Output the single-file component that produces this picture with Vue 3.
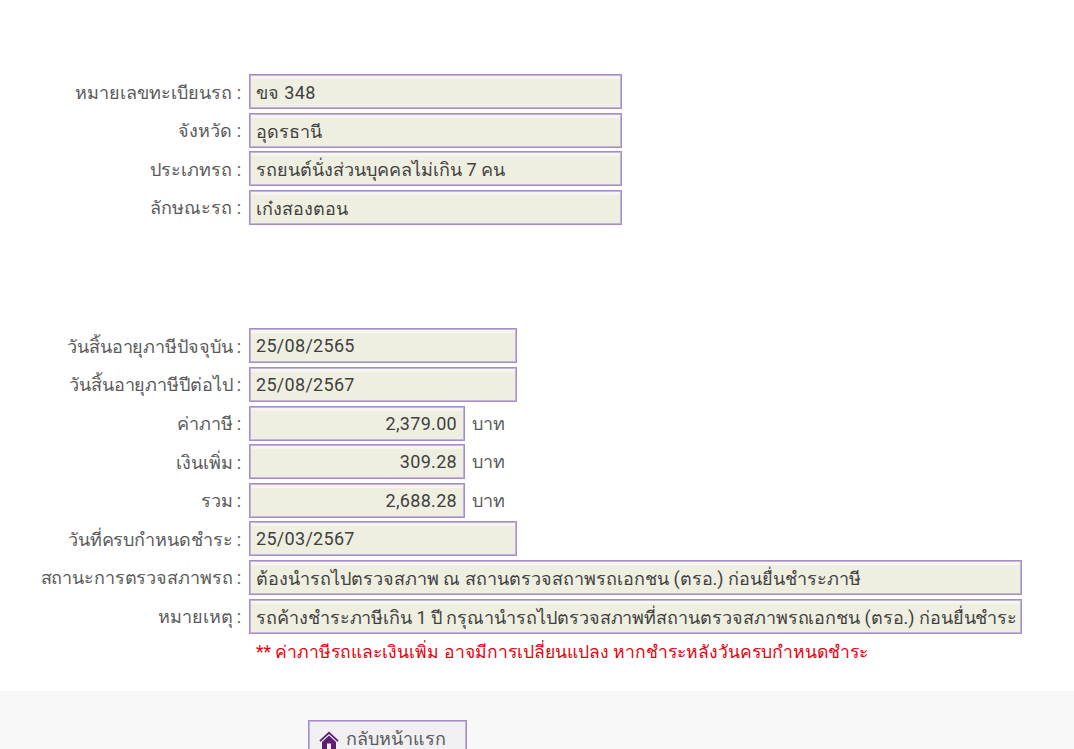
<script setup>
const top = [
  { label: 'หมายเลขทะเบียนรถ :', value: 'ขจ 348', size: 'w-372', fix: 'digits' },
  { label: 'จังหวัด :', value: 'อุดรธานี', size: 'w-372' },
  { label: 'ประเภทรถ :', value: 'รถยนต์นั่งส่วนบุคคลไม่เกิน 7 คน', size: 'w-372' },
  { label: 'ลักษณะรถ :', value: 'เก๋งสองตอน', size: 'w-372' },
]
const bottom = [
  { label: 'วันสิ้นอายุภาษีปัจจุบัน :', value: '25/08/2565', size: 'w-267', fix: 'digits' },
  { label: 'วันสิ้นอายุภาษีปีต่อไป :', value: '25/08/2567', size: 'w-267', fix: 'digits' },
  { label: 'ค่าภาษี :', value: '2,379.00', size: 'w-215', fix: 'digits num', unit: 'บาท' },
  { label: 'เงินเพิ่ม :', value: '309.28', size: 'w-215', fix: 'digits num', unit: 'บาท' },
  { label: 'รวม :', value: '2,688.28', size: 'w-215', fix: 'digits num', unit: 'บาท' },
  { label: 'วันที่ครบกำหนดชำระ :', value: '25/03/2567', size: 'w-267', fix: 'digits' },
  { label: 'สถานะการตรวจสภาพรถ :', value: 'ต้องนำรถไปตรวจสภาพ ณ สถานตรวจสถาพรถเอกชน (ตรอ.) ก่อนยื่นชำระภาษี', size: 'w-773', fix: 'low' },
  { label: 'หมายเหตุ :', value: 'รถค้างชำระภาษีเกิน 1 ปี กรุณานำรถไปตรวจสภาพที่สถานตรวจสภาพรถเอกชน (ตรอ.) ก่อนยื่นชำระ', size: 'w-773', fix: 'low tight' },
]
</script>

<template>
  <div class="page">
    <section class="group first">
      <div v-for="r in top" :key="r.label" class="row">
        <div class="label">{{ r.label }}</div>
        <div class="field" :class="[r.size, r.fix]">{{ r.value }}</div>
      </div>
    </section>
    <section class="group second">
      <div v-for="r in bottom" :key="r.label" class="row">
        <div class="label">{{ r.label }}</div>
        <div class="field" :class="[r.size, r.fix]">{{ r.value }}</div>
        <span v-if="r.unit" class="unit">{{ r.unit }}</span>
      </div>
      <div class="note">** ค่าภาษีรถและเงินเพิ่ม อาจมีการเปลี่ยนแปลง หากชำระหลังวันครบกำหนดชำระ</div>
    </section>
    <footer class="foot">
      <button class="home" type="button">
        <svg width="20" height="18" viewBox="0 0 20 18" class="ico">
          <path d="M10 0.5 L0.3 9.6 L1.6 10.8 L10 3 L18.4 10.8 L19.7 9.6 Z" fill="#5e1f70"/>
          <path d="M3 11 L10 4.6 L17 11 V18 H12 V12.5 H8 V18 H3 Z" fill="#5e1f70"/>
        </svg>
        <span>กลับหน้าแรก</span>
      </button>
    </footer>
  </div>
</template>

<style>
html, body { margin: 0; background: #fff; overflow: hidden; }
</style>

<style scoped>
.page {
  width: 1074px;
  height: 749px;
  overflow: hidden;
  font-family: Roboto, "Noto Sans", "Noto Sans CJK SC", "DejaVu Sans", sans-serif;
  font-size: 18px;
  color: #3f3f3f;
}
.group { display: flex; flex-direction: column; gap: 3.6px; }
.first { padding-top: 74px; }
.second { padding-top: 103.6px; }
.row { display: flex; align-items: center; height: 35px; }
.label {
  width: 241px;
  margin-right: 8px;
  text-align: right;
  white-space: nowrap;
  color: #5a5a5a;
  flex: none;
}
.second .label { letter-spacing: -0.12px; padding-top: 1px; }
.first .label { padding-top: 1px; }
.field {
  box-sizing: border-box;
  height: 35px;
  line-height: 35px;
  padding: 0 7px 0 6px;
  border: 1px solid #a88bc9;
  background: #efefe1;
  box-shadow: inset 0 0 0 1px #c3b2da, inset 0 4px 0 #f6f6ee;
  white-space: nowrap;
  overflow: hidden;
  flex: none;
}
.second .field { line-height: 33px; }
.second .field.low { line-height: 36px; }
.digits { letter-spacing: 0.3px; }
.tight { letter-spacing: -0.06px; }
.num { text-align: right; }
.w-372 { width: 373px; }
.w-267 { width: 268px; }
.w-215 { width: 216px; }
.w-773 { width: 773px; }
.unit { margin-left: 7px; color: #5a5a5a; }
.note { margin-left: 256px; color: #e8000d; font-size: 17.55px; line-height: 30px; }
.foot {
  margin-top: 23.6px;
  height: 60px;
  background: #f8f8f8;
  padding: 29px 0 0 308px;
  box-sizing: border-box;
}
.home {
  box-sizing: border-box;
  display: flex;
  align-items: center;
  gap: 7px;
  width: 159px;
  height: 40px;
  padding: 0 0 2px 10px;
  border: 1px solid #a88bc9;
  box-shadow: inset 0 0 0 1px #c3b2da;
  background: #f0eff1;
  font: inherit;
  color: #5a5a5a;
}
.ico { flex: none; margin-top: 2px; }
</style>
